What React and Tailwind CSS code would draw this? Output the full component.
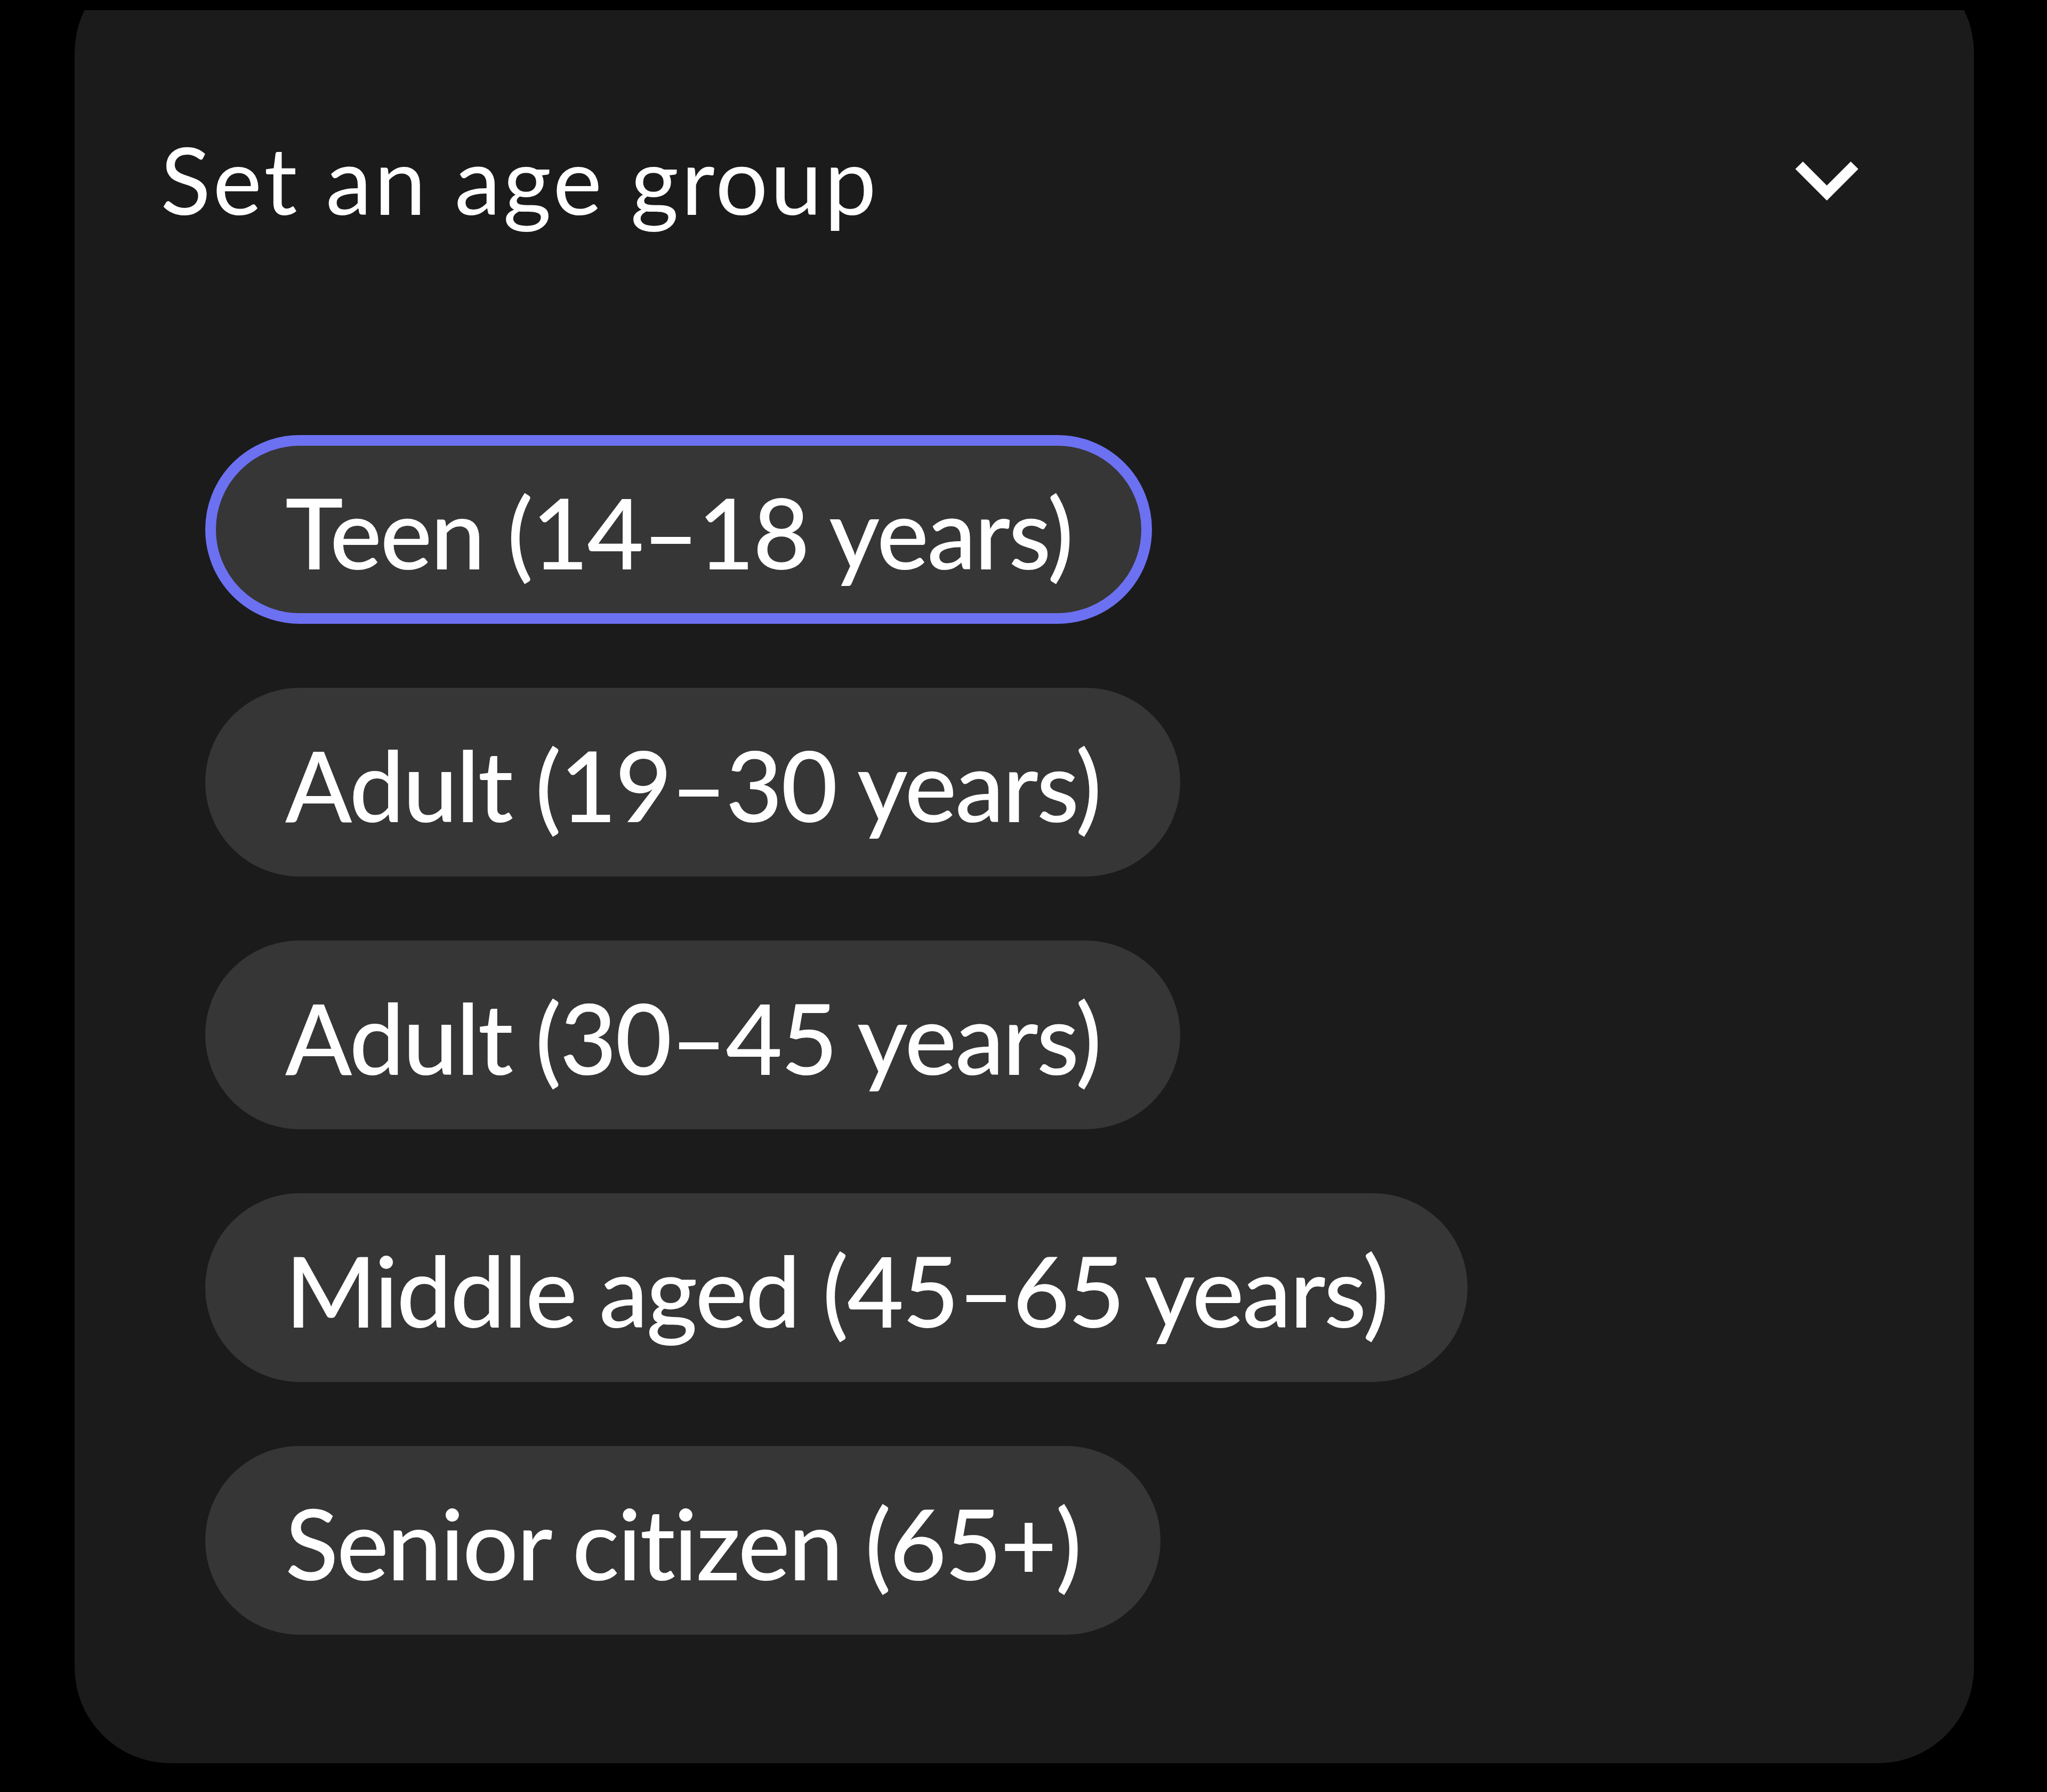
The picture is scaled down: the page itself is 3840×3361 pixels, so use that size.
import React from "react";

const groups = [
  { label: "Teen (14–18 years)", selected: true },
  { label: "Adult (19–30 years)" },
  { label: "Adult (30–45 years)" },
  { label: "Middle aged (45–65 years)" },
  { label: "Senior citizen (65+)" },
];

function Chevron() {
  return (
    <svg width="120" height="80" viewBox="0 0 120 80" fill="none">
      <polyline
        points="8,14 60,66 112,14"
        stroke="white"
        strokeWidth="20"
        strokeLinecap="butt"
        strokeLinejoin="miter"
      />
    </svg>
  );
}

export default function App() {
  return (
    <div className="w-[3840px] h-[3361px] bg-black pt-[19px] pl-[140px] font-['Lato',sans-serif] text-white">
      <div className="w-[3563px] h-[3288px] overflow-hidden">
        <div className="h-[3388px] -mt-[100px] pt-[100px] rounded-[180px] bg-[#1b1b1b] flex flex-col">
          <div className="h-[634px] flex items-center justify-between pl-[161px] pr-[216px]">
            <span className="text-[174px] leading-none font-normal tracking-[4.5px]">Set an age group</span>
            <Chevron />
          </div>
          <div className="mt-[163px] ml-[245px] flex flex-col items-start gap-[120px]">
            {groups.map((g) => (
              <div
                key={g.label}
                className={
                  "h-[354px] rounded-full border-[20px] px-[130px] flex items-center bg-[#363636] " +
                  (g.selected ? "border-[#6c71f2]" : "border-[#363636]")
                }
              >
                <span className="text-[184px] leading-none font-medium tracking-[-3px] pt-[8px]">{g.label}</span>
              </div>
            ))}
          </div>
        </div>
      </div>
    </div>
  );
}
